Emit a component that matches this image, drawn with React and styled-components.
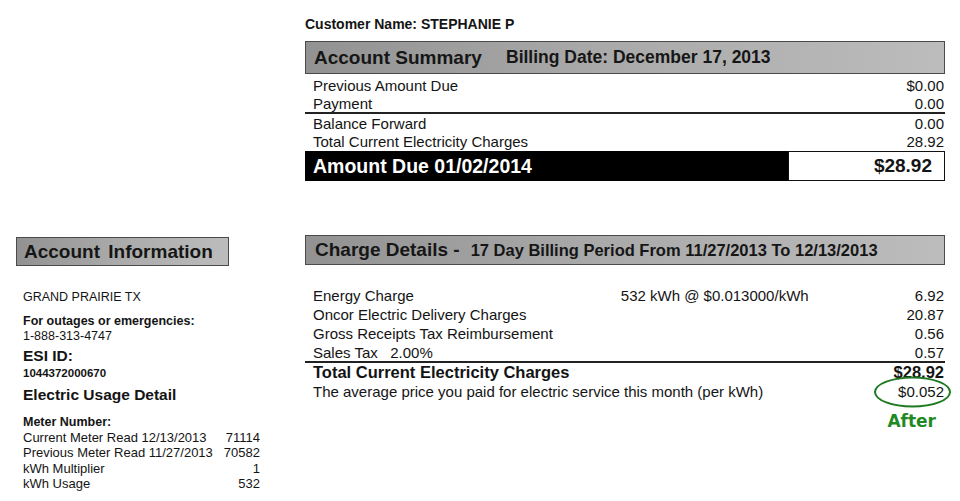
import React from "react";
import styled, { createGlobalStyle } from "styled-components";

const Global = createGlobalStyle`
  html, body { margin: 0; padding: 0; background: #fff; }
  body { font-family: "Liberation Sans", Arial, sans-serif; color: #141414; }
`;

const Page = styled.div`
  width: 960px;
  height: 501px;
  box-sizing: border-box;
  padding: 16px 15px 0 16px;
  display: grid;
  grid-template-columns: 289px 640px;
  grid-template-rows: auto auto;
  align-content: start;
  row-gap: 54px;
  overflow: hidden;
`;

const TopRight = styled.div`
  grid-column: 2;
  grid-row: 1;
  display: flex;
  flex-direction: column;
`;

const CustomerName = styled.div`
  font-size: 14px;
  font-weight: bold;
  line-height: 16px;
  margin-bottom: 9px;
`;

const SectionHeader = styled.div`
  box-sizing: border-box;
  height: ${(p) => p.$h || 33}px;
  width: ${(p) => (p.$w ? `${p.$w}px` : "auto")};
  border: 1px solid #4a4a4a;
  background: linear-gradient(to right, #929292 0%, #a9a9a9 45%, #bcbcbc 100%);
  display: flex;
  align-items: center;
  padding-left: ${(p) => p.$pl || 8}px;
  font-weight: bold;
  color: #161616;
  white-space: nowrap;
`;

const HeaderTitle = styled.span`
  font-size: ${(p) => p.$size || 19}px;
  width: ${(p) => (p.$w ? `${p.$w}px` : "auto")};
  margin-right: ${(p) => p.$mr || 0}px;
  word-spacing: ${(p) => p.$ws || 0}px;
  flex-shrink: 0;
`;

const HeaderSub = styled.span`
  font-size: ${(p) => p.$size || 18}px;
`;

const Rows = styled.div`
  display: flex;
  flex-direction: column;
  padding-top: ${(p) => p.$pt || 0}px;
`;

const Row = styled.div`
  box-sizing: border-box;
  display: flex;
  align-items: center;
  justify-content: space-between;
  height: ${(p) => p.$h || 19}px;
  padding: 0 1px 0 8px;
  font-size: ${(p) => p.$size || 15}px;
  font-weight: ${(p) => (p.$bold ? "bold" : "normal")};
  border-bottom: ${(p) => (p.$rule ? "2px solid #222" : "none")};
`;

const Label = styled.span`
  flex: 1;
`;

const Rate = styled.span`
  width: 294px;
`;

const Amount = styled.span`
  text-align: right;
  position: relative;
`;

const Circle = styled.span`
  position: absolute;
  right: -7px;
  top: 50%;
  width: 77px;
  height: 31px;
  box-sizing: border-box;
  transform: translateY(-50%);
  border: 2px solid #1d7a22;
  border-radius: 50%;
  pointer-events: none;
`;

const DueBar = styled.div`
  display: flex;
  height: 30px;
  margin-top: 1px;
`;

const DueLabel = styled.div`
  width: 483px;
  background: #000;
  color: #fff;
  font-size: 19.5px;
  font-weight: bold;
  display: flex;
  align-items: center;
  padding-left: 8px;
  box-sizing: border-box;
`;

const DueAmount = styled.div`
  flex: 1;
  box-sizing: border-box;
  border: 1.5px solid #111;
  background: #fff;
  font-size: 19px;
  font-weight: bold;
  display: flex;
  align-items: center;
  justify-content: flex-end;
  padding-right: 12px;
`;

const LeftCol = styled.div`
  grid-column: 1;
  grid-row: 2;
  padding-top: 2px;
  display: flex;
  flex-direction: column;
`;

const InfoBody = styled.div`
  padding-left: 7px;
  padding-top: 24px;
  display: flex;
  flex-direction: column;
  width: 237px;
`;

const Line = styled.div`
  font-size: ${(p) => p.$size || 12.5}px;
  font-weight: ${(p) => (p.$bold ? "bold" : "normal")};
  line-height: ${(p) => p.$lh || 15}px;
  margin-top: ${(p) => p.$mt || 0}px;
  display: flex;
  justify-content: space-between;
`;

const RightCol = styled.div`
  grid-column: 2;
  grid-row: 2;
  display: flex;
  flex-direction: column;
`;

const AfterNote = styled.div`
  align-self: flex-end;
  margin-right: 9px;
  margin-top: 10px;
  font-family: "DejaVu Sans", sans-serif;
  font-weight: bold;
  font-size: 17px;
  line-height: 20px;
  color: #1f8a24;
`;

const summaryRows = [
  ["Previous Amount Due", "$0.00"],
  ["Payment", "0.00", true],
  ["Balance Forward", "0.00"],
  ["Total Current Electricity Charges", "28.92"],
];

const charges = [
  ["Energy Charge", "532 kWh @ $0.013000/kWh", "6.92"],
  ["Oncor Electric Delivery Charges", "", "20.87"],
  ["Gross Receipts Tax Reimbursement", "", "0.56"],
  ["Sales Tax\u00a0\u00a0 2.00%", "", "0.57", true],
];

const meter = [
  ["Current Meter Read 12/13/2013", "71114"],
  ["Previous Meter Read 11/27/2013", "70582"],
  ["kWh Multiplier", "1"],
  ["kWh Usage", "532"],
];

export default function App() {
  return (
    <>
      <Global />
      <Page>
        <TopRight>
          <CustomerName>Customer Name: STEPHANIE P</CustomerName>
          <SectionHeader $h={33}>
            <HeaderTitle $size={19} $w={192}>Account Summary</HeaderTitle>
            <HeaderSub $size={17.5}>Billing Date: December 17, 2013</HeaderSub>
          </SectionHeader>
          <Rows $pt={2}>
            {summaryRows.map(([l, v, rule]) => (
              <Row key={l} $h={rule ? 20 : 18} $rule={rule}>
                <Label>{l}</Label>
                <Amount>{v}</Amount>
              </Row>
            ))}
          </Rows>
          <DueBar>
            <DueLabel>Amount Due 01/02/2014</DueLabel>
            <DueAmount>$28.92</DueAmount>
          </DueBar>
        </TopRight>

        <LeftCol>
          <SectionHeader $h={29} $w={213} $pl={7}>
            <HeaderTitle $size={19} $ws={3}>Account Information</HeaderTitle>
          </SectionHeader>
          <InfoBody>
            <Line>GRAND PRAIRIE TX</Line>
            <Line $bold $mt={9}>For outages or emergencies:</Line>
            <Line>1-888-313-4747</Line>
            <Line $bold $size={15.5} $lh={18} $mt={3}>ESI ID:</Line>
            <Line $bold $size={11.5} $lh={16}>1044372000670</Line>
            <Line $bold $size={15.5} $lh={20} $mt={4}>Electric Usage Detail</Line>
            <Line $bold $mt={10}>Meter Number:</Line>
            {meter.map(([l, v]) => (
              <Line key={l} $size={13} $lh={15.4}>
                <span>{l}</span>
                <span>{v}</span>
              </Line>
            ))}
          </InfoBody>
        </LeftCol>

        <RightCol>
          <SectionHeader $h={30} $pl={9}>
            <HeaderTitle $size={19} $mr={11}>Charge Details -</HeaderTitle>
            <HeaderSub $size={16.5}>17 Day Billing Period From 11/27/2013 To 12/13/2013</HeaderSub>
          </SectionHeader>
          <Rows $pt={21}>
            {charges.map(([l, r, v, rule]) => (
              <Row key={l} $h={rule ? 20 : 19} $rule={rule}>
                <Label>{l}</Label>
                <Rate>{r}</Rate>
                <Amount>{v}</Amount>
              </Row>
            ))}
            <Row $bold $size={16.5}>
              <Label>Total Current Electricity Charges</Label>
              <Amount>$28.92</Amount>
            </Row>
            <Row>
              <Label>The average price you paid for electric service this month (per kWh)</Label>
              <Amount>
                $0.052
                <Circle />
              </Amount>
            </Row>
          </Rows>
          <AfterNote>After</AfterNote>
        </RightCol>
      </Page>
    </>
  );
}
